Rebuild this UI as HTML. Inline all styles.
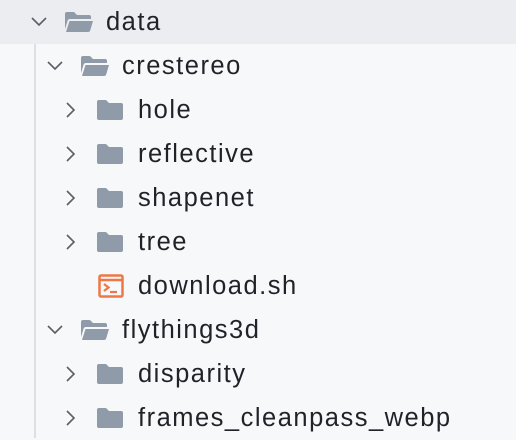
<!DOCTYPE html>
<html><head><meta charset="utf-8"><style>
html,body{margin:0;padding:0;width:516px;height:438px;overflow:hidden;background:#f7f8fa;font-family:"Liberation Sans",sans-serif;}
.row{position:absolute;left:0;width:516px;height:44px;}
.t{position:absolute;font-size:25.5px;letter-spacing:1.5px;color:#1f2328;line-height:44px;top:0;white-space:nowrap}
svg{position:absolute}
</style></head><body>
<div class="row" style="top:0;background:#ebedf0"></div>
<div style="position:absolute;left:34px;top:44px;width:2px;height:394px;background:#dcdfe3"></div>
<div id="c"></div>
<script>
const rows=[
[0,'down','open','data'],
[1,'down','open','crestereo'],
[2,'right','closed','hole'],
[2,'right','closed','reflective'],
[2,'right','closed','shapenet'],
[2,'right','closed','tree'],
[2,'none','sh','download.sh'],
[1,'down','open','flythings3d'],
[2,'right','closed','disparity'],
[2,'right','closed','frames_cleanpass_webp']];
let h='';
rows.forEach((r,i)=>{
 const y=i*44-0.5;
 const cy=y+22;
 const x0=16*r[0];
 const cx=x0+39;
 if(r[1]=='down') h+=`<svg style="left:${cx-10}px;top:${cy-10}px" width="20" height="20"><path d="M3 6 L10 13 L17 6" fill="none" stroke="#5a5f66" stroke-width="1.6"/></svg>`;
 if(r[1]=='right') h+=`<svg style="left:${cx-10}px;top:${cy-10}px" width="20" height="20"><path d="M6 3 L13 10 L6 17" fill="none" stroke="#5a5f66" stroke-width="1.6"/></svg>`;
 const fx=x0+64;
 if(r[2]=='open') h+=`<svg style="left:${fx}px;top:${cy-12}px" width="30" height="24"><path d="M1 4 Q1 2 3 2 L10 2 L13 5 L25 5 Q27 5 27 7 L27 9 L6 9 Q4 9 3.5 11 L1 19 Z" fill="#8f9ba8"/><path d="M5.5 11 L29 11 L26 21 Q25.5 22 24 22 L2 22 Z" fill="#8f9ba8"/></svg>`;
 if(r[2]=='closed') h+=`<svg style="left:${fx}px;top:${cy-12}px" width="30" height="24"><path d="M1 4 Q1 2 3 2 L10 2 L13 5 L25 5 Q27 5 27 7 L27 20 Q27 22 25 22 L3 22 Q1 22 1 20 Z" fill="#8f9ba8"/></svg>`;
 if(r[2]=='sh') h+=`<svg style="left:${fx+2}px;top:${cy-12}px" width="26" height="24"><rect x="1.5" y="1.5" width="23" height="21" rx="1.5" fill="none" stroke="#ee7748" stroke-width="2.5"/><line x1="1" y1="6" x2="25" y2="6" stroke="#ee7748" stroke-width="2.5"/><path d="M6 10 L10.5 13.5 L6 17" fill="none" stroke="#ee7748" stroke-width="2.2"/><line x1="12" y1="18" x2="19" y2="18" stroke="#ee7748" stroke-width="2.2"/></svg>`;
 h+=`<div class="t" style="left:${x0+106}px;top:${y}px">${r[3]}</div>`;
});
document.getElementById('c').innerHTML=h;
</script>
</body></html>
